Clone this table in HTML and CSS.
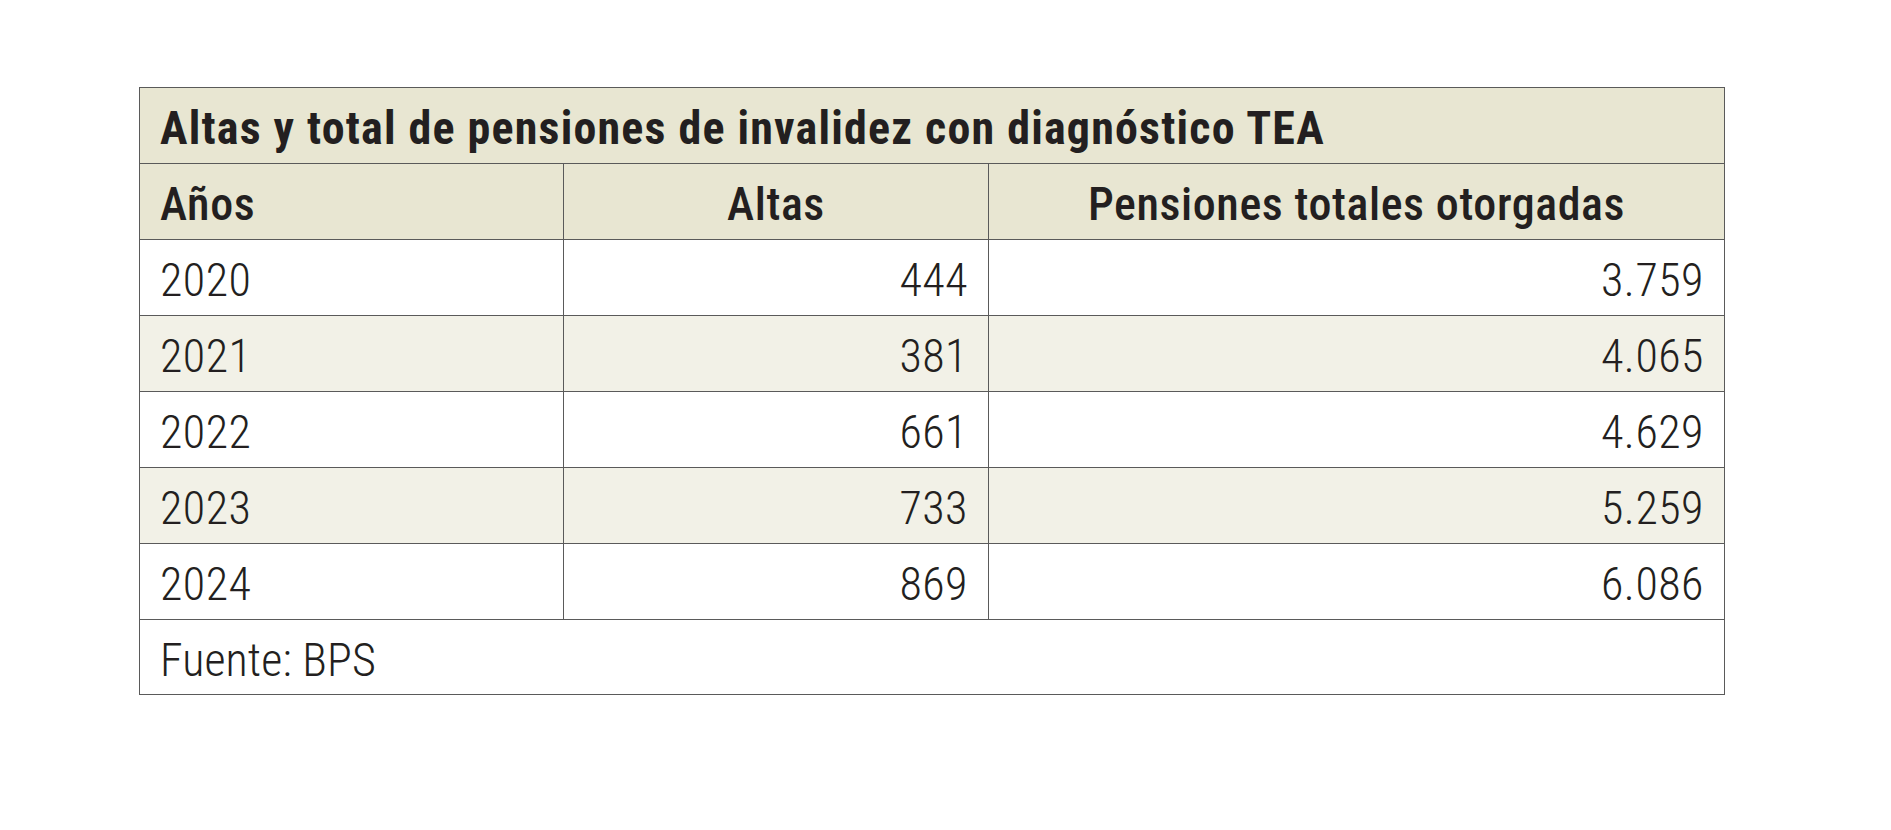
FILE: index.html
```html
<!DOCTYPE html>
<html lang="es">
<head>
<meta charset="utf-8">
<title>Altas y total de pensiones de invalidez con diagnóstico TEA</title>
<link rel="stylesheet" href="styles.css">
</head>
<body>
<table class="data">
  <colgroup>
    <col class="c1">
    <col class="c2">
    <col class="c3">
  </colgroup>
  <thead>
    <tr class="title-row"><th colspan="3" class="title">Altas y total de pensiones de invalidez con diagnóstico TEA</th></tr>
    <tr class="head-row">
      <th class="left">Años</th>
      <th class="center">Altas</th>
      <th class="center">Pensiones totales otorgadas</th>
    </tr>
  </thead>
  <tbody>
    <tr><td class="left">2020</td><td class="num">444</td><td class="num">3.759</td></tr>
    <tr class="alt"><td class="left">2021</td><td class="num">381</td><td class="num">4.065</td></tr>
    <tr><td class="left">2022</td><td class="num">661</td><td class="num">4.629</td></tr>
    <tr class="alt"><td class="left">2023</td><td class="num">733</td><td class="num">5.259</td></tr>
    <tr><td class="left">2024</td><td class="num">869</td><td class="num">6.086</td></tr>
    <tr><td colspan="3" class="left source">Fuente: BPS</td></tr>
  </tbody>
</table>
</body>
</html>
```
FILE: styles.css
```css
html, body {
  background: #ffffff;
}
body {
  margin: 0;
  padding: 87px 0 0 139px;
  font-family: Roboto, "Liberation Sans", sans-serif;
  color: #231f20;
}
.data {
  border-collapse: collapse;
  width: 1585px;
  table-layout: fixed;
  border: 1px solid #3a3a3a;
}
.c1 { width: 424px; }
.c2 { width: 425px; }
.c3 { width: 736px; }
.data th,
.data td {
  height: 76px;
  box-sizing: border-box;
  border: 1px solid #5a5a5a;
  padding: 5px 20px 0;
  font-size: 46px;
  font-stretch: 87%;
  line-height: 1;
  vertical-align: middle;
  white-space: nowrap;
}
.data th {
  background: #e8e6d2;
  font-weight: 500;
  letter-spacing: 0.6px;
}
.data th.title {
  font-weight: 700;
  letter-spacing: 1.2px;
  text-align: left;
}
.data td {
  font-weight: 300;
  letter-spacing: 0.5px;
  background: #ffffff;
}
.data td.source {
  height: 75px;
  letter-spacing: 0.1px;
}
.data tr.alt td {
  background: #f2f1e7;
}
.left { text-align: left; }
.center { text-align: center; }
.num { text-align: right; }
```
